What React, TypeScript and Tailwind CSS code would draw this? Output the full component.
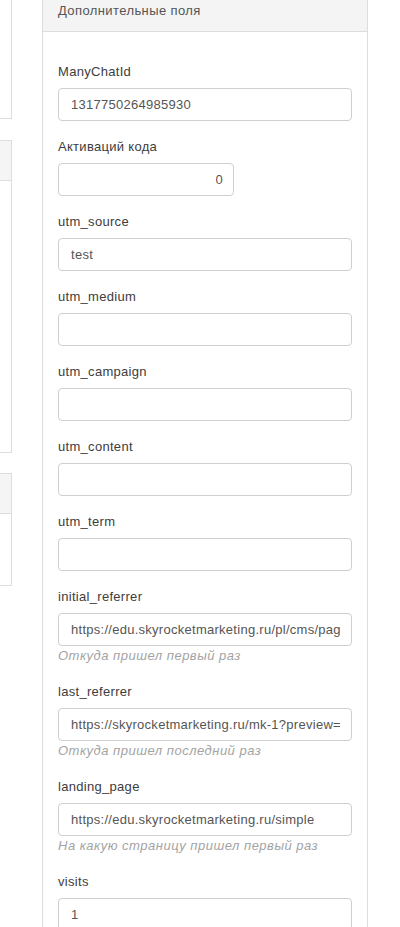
type Field = {
  label: string;
  value?: string;
  help?: string;
  narrow?: boolean;
};

const fields: Field[] = [
  { label: 'ManyChatId', value: '1317750264985930' },
  { label: 'Активаций кода', value: '0', narrow: true },
  { label: 'utm_source', value: 'test' },
  { label: 'utm_medium' },
  { label: 'utm_campaign' },
  { label: 'utm_content' },
  { label: 'utm_term' },
  {
    label: 'initial_referrer',
    value: 'https://edu.skyrocketmarketing.ru/pl/cms/pag',
    help: 'Откуда пришел первый раз',
  },
  {
    label: 'last_referrer',
    value: 'https://skyrocketmarketing.ru/mk-1?preview=t',
    help: 'Откуда пришел последний раз',
  },
  {
    label: 'landing_page',
    value: 'https://edu.skyrocketmarketing.ru/simple',
    help: 'На какую страницу пришел первый раз',
  },
  { label: 'visits', value: '1' },
];

function FormField({ field }: { field: Field }) {
  return (
    <div className={field.help ? 'mb-[17px]' : 'mb-[16px]'}>
      <div className="h-[20px] text-[13px] leading-[20px] text-[#3d3d3d] tracking-[0.3px] mb-[6px]">
        {field.label}
      </div>
      <div
        className={
          'h-[33px] rounded-[4px] border border-[#cfcfcf] bg-white flex items-center overflow-hidden ' +
          (field.narrow ? 'w-[176px] justify-end pr-[10px]' : 'w-full pl-[12px] pr-[11px]')
        }
      >
        <span className="text-[13px] text-[#555] tracking-[0.27px] whitespace-nowrap overflow-hidden">
          {field.value}
        </span>
      </div>
      {field.help && (
        <div className="mt-[1px] h-[18px] text-[13px] leading-[18px] italic text-[#a3a3a3] tracking-[0.5px] whitespace-nowrap">
          {field.help}
        </div>
      )}
    </div>
  );
}

export default function App() {
  return (
    <div
      className="w-[400px] h-[927px] overflow-hidden bg-white flex"
      style={{ fontFamily: '"Liberation Sans", Arial, sans-serif' }}
    >
      {/* left column, mostly off-screen */}
      <div className="w-[12px] shrink-0 flex flex-col">
        <div className="h-[119px] border-r border-b border-[#ddd]" />
        <div className="mt-[21px] h-[313px] border-r border-t border-b border-[#ddd]">
          <div className="h-[40px] bg-[#f5f5f5] border-b border-[#ddd]" />
        </div>
        <div className="mt-[20px] h-[113px] border-r border-t border-b border-[#ddd]">
          <div className="h-[40px] bg-[#f5f5f5] border-b border-[#ddd]" />
        </div>
      </div>

      {/* main panel */}
      <div className="ml-[30px] w-[326px] shrink-0 border-l border-r border-[#ddd] self-stretch">
        <div className="h-[32px] bg-[#f4f4f4] border-b border-[#ddd] px-[15px] pt-[1px]">
          <div className="text-[13px] leading-[20px] text-[#555] tracking-[0.4px]">Дополнительные поля</div>
        </div>
        <div className="px-[15px] pt-[30px]">
          {fields.map((f) => (
            <FormField key={f.label} field={f} />
          ))}
        </div>
      </div>
    </div>
  );
}
